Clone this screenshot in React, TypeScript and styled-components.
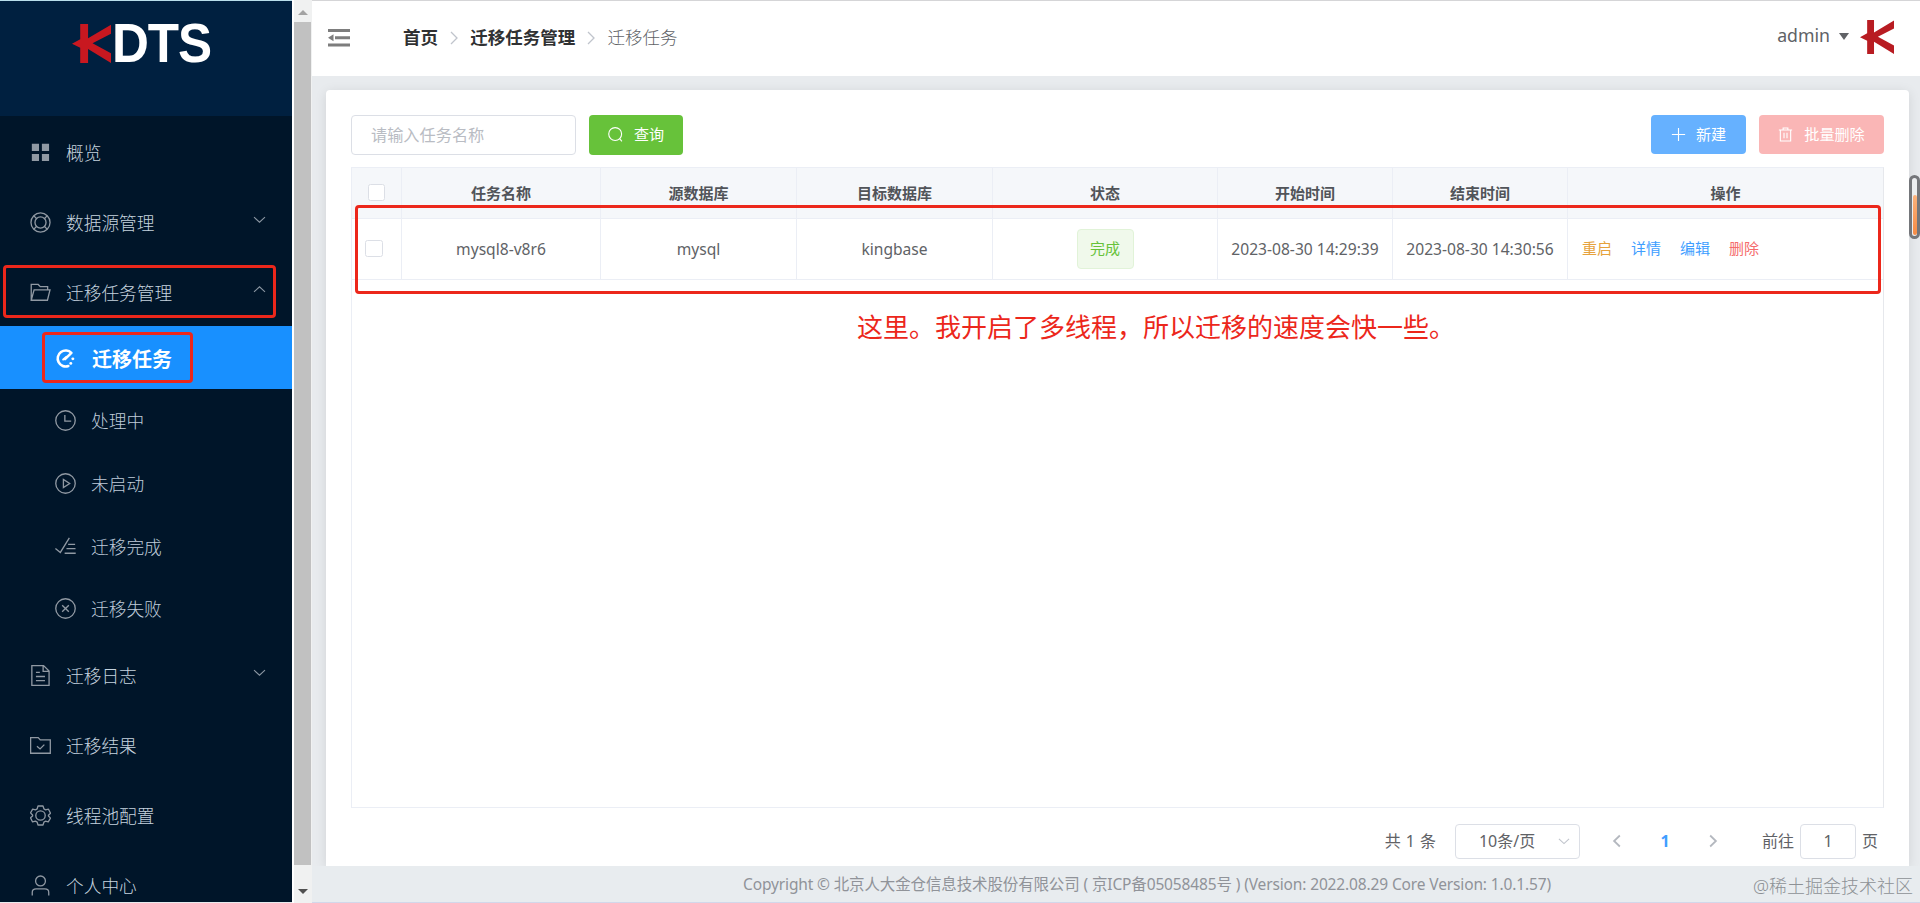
import React from "react";
import styled, { createGlobalStyle, css } from "styled-components";

const GlobalStyle = createGlobalStyle`
  * { box-sizing: border-box; }
  body {
    margin: 0;
    overflow: hidden;
    font-family: "Noto Sans", "Noto Sans CJK SC", sans-serif;
    color: #606266;
  }
`;

const Page = styled.div`
  position: relative;
  display: flex;
  width: 1920px;
  height: 903px;
  overflow: hidden;
  background: #e8ebee;
`;

/* ---------- sidebar ---------- */
const Sidebar = styled.aside`
  width: 292px;
  height: 902px;
  flex: none;
  overflow: hidden;
  background: #001529;
  border-top: 1px solid #b9dfec;
`;
const Brand = styled.div`
  display: flex;
  height: 115px;
  padding: 23px 0 0 72px;
  background: #002040;
`;
const BrandText = styled.span`
  margin: -9px 0 0 1px;
  height: 56px;
  line-height: 56px;
  color: #fff;
  font-family: "Liberation Sans", Arial, sans-serif;
  font-size: 55px;
  font-weight: 700;
  letter-spacing: -1.2px;
  transform: scaleX(0.93);
  transform-origin: left center;
`;
const MenuItem = styled.div`
  display: flex;
  align-items: center;
  height: 69.8px;
  padding: 4px 24px 0 30px;
  color: #c5d3df;
  font-size: 17.7px;
  font-weight: 300;
`;
const SubMenu = styled.div`
  padding-top: 0.9px;
  height: 313.5px;
`;
const SubItem = styled.div<{ $active?: boolean }>`
  display: flex;
  align-items: center;
  height: 62.6px;
  padding: 1.5px 0 0 55px;
  color: #bfcbd9;
  font-size: 17.7px;
  font-weight: 300;
  ${(p) =>
    p.$active &&
    css`
      background: #1890ff;
      color: #fff;
      font-size: 20px;
      font-weight: 700;
    `}
`;
const MenuIcon = styled.span`
  display: flex;
  width: 21px;
  margin-right: 15px;
  color: #9099a3;
`;
const ActiveIcon = styled(MenuIcon)`
  margin-right: 16px;
  color: #fff;
`;
const Label = styled.span<{ $drop?: number }>`
  flex: 1;
  line-height: 24px;
  padding-top: ${(p) => p.$drop ?? 1}px;
  white-space: nowrap;
`;
const Arrow = styled.span`
  display: flex;
  margin: -6px 2px 0 0;
  color: #8b97a3;
`;

/* ---------- left scroll bar ---------- */
const ScrollTrack = styled.div`
  display: flex;
  flex-direction: column;
  align-items: center;
  flex: none;
  width: 20px;
  padding: 10px 1px 0 2px;
  background: linear-gradient(to right, #fff 2px, #f0f1f1 2px);
`;
const ScrollThumb = styled.div`
  width: 17px;
  height: 843px;
  margin: 7px 0 24px;
  background: #c1c1c1;
`;
const Triangle = styled.div<{ $down?: boolean }>`
  width: 0;
  height: 0;
  border: 5px solid transparent;
  ${(p) =>
    p.$down
      ? "border-top-color:#505050;border-bottom:0;"
      : "border-bottom-color:#a3a3a3;border-top:0;"}
`;

/* ---------- main ---------- */
const Main = styled.main`
  display: flex;
  flex-direction: column;
  flex: 1;
  min-width: 0;
`;
const Header = styled.header`
  display: flex;
  align-items: center;
  height: 76px;
  padding: 0 26px 2px 16px;
  background: #fff;
  border-top: 1px solid #d5d5d7;
`;
const Crumbs = styled.nav`
  display: flex;
  align-items: center;
  margin: -1px 0 0 53px;
  font-size: 17.5px;
  line-height: 24px;
`;
const Crumb = styled.span<{ $strong?: boolean }>`
  color: ${(p) => (p.$strong ? "#303133" : "#606266")};
  font-weight: ${(p) => (p.$strong ? 700 : 300)};
`;
const CrumbSep = styled.span`
  display: flex;
  margin: 1px 12.3px 0 12px;
`;
const User = styled.div`
  display: flex;
  align-items: center;
  margin: -1px 0 0 auto;
  font-size: 17.7px;
  line-height: 24px;
`;
const UserName = styled.span`
  margin: -4px 9px 0 0;
`;
const Caret = styled.div`
  width: 0;
  height: 0;
  margin: -2px 11px 0 0;
  border: 5.5px solid transparent;
  border-top: 7px solid #606266;
  border-bottom: 0;
`;
const Card = styled.section`
  display: flex;
  flex-direction: column;
  width: 1583px;
  height: 776px;
  margin: 14px 0 0 14px;
  padding: 25px 25px 0;
  background: #fff;
  border-radius: 4px 4px 0 0;
  box-shadow: 0 2px 12px rgba(0, 0, 0, 0.1);
`;
const Toolbar = styled.div`
  display: flex;
  height: 40px;
  margin-bottom: 12px;
`;
const SearchBox = styled.div`
  width: 225px;
  height: 40px;
  margin-right: 13px;
  padding-left: 19px;
  border: 1px solid #dcdfe6;
  border-radius: 4px;
  color: #b9bcc3;
  font-size: 16.2px;
  line-height: 39px;
`;
const Button = styled.button<{ $bg: string; $w: number; $gap: number }>`
  display: flex;
  align-items: center;
  justify-content: center;
  gap: ${(p) => p.$gap}px;
  width: ${(p) => p.$w}px;
  height: 40px;
  padding: 0 0 2px;
  border: 0;
  border-radius: 4px;
  background: ${(p) => p.$bg};
  color: #fff;
  font: 400 15.1px/20px "Noto Sans", "Noto Sans CJK SC", sans-serif;
`;
const Actions = styled.div`
  display: flex;
  gap: 13px;
  margin-left: auto;
  ${Button} { height: 39px; padding-bottom: 1px; }
`;

const TableBox = styled.div`
  width: 1533px;
  height: 641px;
  border: 1px solid #ebeef5;
  border-right: 1.5px solid #e6e8ec;
`;
const Row = styled.div<{ $head?: boolean }>`
  display: grid;
  grid-template-columns: 50px 199px 196px 196px 225px 175px 175px 1fr;
  height: ${(p) => (p.$head ? 51 : 61)}px;
  background: ${(p) => (p.$head ? "#f5f7fa" : "#fff")};
  color: ${(p) => (p.$head ? "#515459" : "#606266")};
  font-size: ${(p) => (p.$head ? 15 : 15.6)}px;
  font-weight: ${(p) => (p.$head ? 700 : 400)};
`;
const Cell = styled.div<{ $align?: string }>`
  display: flex;
  align-items: center;
  justify-content: ${(p) => p.$align || "center"};
  padding-bottom: 1px;
  border-right: 1px solid #ebeef5;
  border-bottom: 1px solid #ebeef5;
  line-height: 22px;
  white-space: nowrap;
  &:last-child { border-right: 0; }
`;
const Check = styled.span<{ $shift: number }>`
  width: 17.5px;
  height: 17.5px;
  margin-left: ${(p) => p.$shift}px;
  background: #fff;
  border: 1px solid #dcdfe6;
  border-radius: 2.5px;
`;
const Tag = styled.span`
  width: 57px;
  height: 40px;
  border: 1px solid #e1f3d8;
  border-radius: 4px;
  background: #f0f9eb;
  color: #67c23a;
  font-size: 15px;
  line-height: 37px;
  text-align: center;
`;
const Link = styled.a<{ $color: string }>`
  margin: -1px 5px 0 14px;
  color: ${(p) => p.$color};
  font-size: 15px;
`;

const Pagination = styled.div`
  display: flex;
  align-items: center;
  height: 35px;
  margin-top: 16px;
  padding-right: 6px;
  justify-content: flex-end;
  font-size: 16px;
  line-height: 24px;
`;
const Total = styled.span`
  margin: -2px 19px 0 0;
  word-spacing: 0.9px;
`;
const Select = styled.div`
  display: flex;
  align-items: center;
  justify-content: space-between;
  width: 125px;
  height: 35px;
  margin-right: 30px;
  padding: 0 9px 2px 23px;
  border: 1px solid #dcdfe6;
  border-radius: 4px;
  svg { color: #c0c4cc; }
`;
const PageArrow = styled.span`
  display: flex;
  margin-top: -2px;
  color: #b4b8bf;
`;
const PageNo = styled.span`
  width: 82px;
  margin-top: -1px;
  color: #409eff;
  font-weight: 700;
  text-align: center;
`;
const Jump = styled.div`
  width: 56px;
  height: 35px;
  margin: 0 6px 0 6px;
  border: 1px solid #dcdfe6;
  border-radius: 4px;
  line-height: 32px;
  text-align: center;
`;
const JumpLabel = styled.span<{ $gap?: number }>`
  margin: -2px 0 0 ${(p) => p.$gap || 0}px;
`;

const Footer = styled.footer`
  position: relative;
  height: 36px;
  z-index: 1;
  background: #e8ecef;
  color: #909399;
  font-size: 15.5px;
  letter-spacing: -0.135px;
  line-height: 37px;
  white-space: nowrap;
  padding-left: 431px;
`;
const BottomEdge = styled.div`
  position: relative;
  z-index: 1;
  height: 1px;
  background: #d2d7ea;
`;

/* ---------- overlays ---------- */
const Mark = styled.div<{ $x: number; $y: number; $w: number; $h: number }>`
  position: absolute;
  left: ${(p) => p.$x}px;
  top: ${(p) => p.$y}px;
  width: ${(p) => p.$w}px;
  height: ${(p) => p.$h}px;
  border: 3px solid #ec271b;
  border-radius: 4px;
  z-index: 2;
`;
const Note = styled.div`
  position: absolute;
  left: 857px;
  top: 309px;
  color: #ec271b;
  font-size: 26px;
  line-height: 36px;
  white-space: nowrap;
  z-index: 2;
`;
const Watermark = styled.div`
  position: absolute;
  left: 1753px;
  top: 874px;
  color: #8d9195;
  font-size: 18px;
  font-weight: 300;
  line-height: 24px;
  white-space: nowrap;
  z-index: 2;
`;
const FloatHandle = styled.div`
  position: absolute;
  left: 1909px;
  top: 175px;
  width: 11px;
  height: 64px;
  padding: 17px 0 0 1px;
  border: 3px solid #74767a;
  border-radius: 6px;
  background: #eceef0;
  z-index: 2;
`;
const FloatFill = styled.div`
  width: 4px;
  height: 40px;
  border-radius: 2px;
  background: linear-gradient(to bottom, #fbb27c, #f58b45);
`;

/* ---------- icons ---------- */
const Ico = ({ size = 21, sw = 64, children }: { size?: number; sw?: number; children: React.ReactNode }) => (
  <svg width={size} height={size} viewBox="0 0 1024 1024" fill="none" stroke="currentColor" strokeWidth={sw}>
    {children}
  </svg>
);
const KMark = ({ w, h, color }: { w: number; h: number; color: string }) => (
  <svg width={w} height={h} viewBox="0 0 114 117" preserveAspectRatio="none" fill={color}>
    <path d="M24 0H47V43L114 2V29L60 58L114 88V117L47 75V117H24V71L0 59L24 46Z" />
  </svg>
);
const Chevron = ({ d, size, sw }: { d: "up" | "down" | "left" | "right"; size: number; sw: number }) => {
  const paths = {
    up: "M80 700L512 300L944 700",
    down: "M80 330L512 730L944 330",
    left: "M720 110L300 512L720 914",
    right: "M304 110L724 512L304 914",
  };
  return (
    <Ico size={size} sw={sw}>
      <path d={paths[d]} />
    </Ico>
  );
};

const icons: Record<string, React.ReactNode> = {
  grid: (
    <g fill="currentColor" stroke="none">
      <path d="M90 90H440V440H90ZM580 90H930V440H580ZM90 580H440V930H90ZM580 580H930V930H580Z" />
    </g>
  ),
  help: (
    <>
      <circle cx="512" cy="512" r="465" />
      <circle cx="512" cy="512" r="270" />
      <path d="M190 190L325 325M834 190L699 325M190 834L325 699M834 834L699 699" />
    </>
  ),
  folder: <path d="M60 890V120H400L500 230H860V385M60 890L200 385H975L850 890H60Z" />,
  process: (
    <>
      <path
        strokeWidth="125"
        strokeLinecap="round"
        strokeLinejoin="round"
        d="M650 880A390 390 0 1 1 800 240L490 540"
      />
      <path strokeWidth="100" strokeLinecap="round" d="M400 560L560 430" />
      <circle cx="870" cy="530" r="72" fill="currentColor" stroke="none" />
      <circle cx="770" cy="750" r="72" fill="currentColor" stroke="none" />
    </>
  ),
  clock: (
    <>
      <circle cx="512" cy="512" r="475" />
      <path d="M480 240V545H790" />
    </>
  ),
  play: (
    <>
      <circle cx="512" cy="512" r="475" />
      <path d="M410 320V704L715 512Z" />
    </>
  ),
  finished: <path d="M20 610L260 800L700 90M640 410H980M560 620H1000M470 840H1010" />,
  close: (
    <>
      <circle cx="512" cy="512" r="475" />
      <path d="M350 350L674 674M674 350L350 674" />
    </>
  ),
  doc: (
    <>
      <path d="M90 30H660L930 290V990H90ZM640 40V310H920" />
      <path d="M290 360H480M290 560H730M290 760H730" />
    </>
  ),
  folderOk: <path d="M30 130H400L500 240H990V890H30ZM340 550L490 680L700 470" />,
  gear: (
    <>
      <circle cx="512" cy="512" r="230" />
      <path
        strokeLinejoin="round"
        d="M390 50H634L680 190L760 235L900 205L1000 400L900 500V540L1000 640L890 825L750 790L680 835L634 975H390L350 835L265 790L125 825L25 625L125 540V490L25 385L130 200L270 235L350 190Z"
      />
    </>
  ),
  user: (
    <>
      <circle cx="512" cy="290" r="240" />
      <path d="M110 1000V850Q110 680 300 680H724Q914 680 914 850V1000" />
    </>
  ),
};

type Item = { icon: string; text: string; arrow?: "up" | "down" };
const topItems: Item[] = [
  { icon: "grid", text: "概览" },
  { icon: "help", text: "数据源管理", arrow: "down" },
  { icon: "folder", text: "迁移任务管理", arrow: "up" },
];
const subItems: Item[] = [
  { icon: "process", text: "迁移任务" },
  { icon: "clock", text: "处理中" },
  { icon: "play", text: "未启动" },
  { icon: "finished", text: "迁移完成" },
  { icon: "close", text: "迁移失败" },
];
const bottomItems: Item[] = [
  { icon: "doc", text: "迁移日志", arrow: "down" },
  { icon: "folderOk", text: "迁移结果" },
  { icon: "gear", text: "线程池配置" },
  { icon: "user", text: "个人中心" },
];

const Entry = ({ icon, text, arrow }: Item) => (
  <MenuItem>
    <MenuIcon>
      <Ico>{icons[icon]}</Ico>
    </MenuIcon>
    <Label>{text}</Label>
    {arrow && (
      <Arrow>
        <Chevron d={arrow} size={13} sw={85} />
      </Arrow>
    )}
  </MenuItem>
);

const Separator = () => (
  <CrumbSep>
    <svg width="8" height="14" viewBox="0 0 8 14" fill="none" stroke="#c0c4cc" strokeWidth="1.3">
      <path d="M1 1L7 7L1 13" />
    </svg>
  </CrumbSep>
);

const columns = ["任务名称", "源数据库", "目标数据库", "状态", "开始时间", "结束时间", "操作"];

export default function App() {
  return (
    <>
      <GlobalStyle />
      <Page>
        <Sidebar>
          <Brand>
            <KMark w={39} h={39} color="#c81820" />
            <BrandText>DTS</BrandText>
          </Brand>
          {topItems.map((i) => (
            <Entry key={i.text} {...i} />
          ))}
          <SubMenu>
            {subItems.map((i, n) => {
              const Wrap = n === 0 ? ActiveIcon : MenuIcon;
              return (
                <SubItem key={i.text} $active={n === 0}>
                  <Wrap>
                    <Ico>{icons[i.icon]}</Ico>
                  </Wrap>
                  <Label $drop={n === 0 ? 3 : 1}>{i.text}</Label>
                </SubItem>
              );
            })}
          </SubMenu>
          {bottomItems.map((i) => (
            <Entry key={i.text} {...i} />
          ))}
        </Sidebar>
        <ScrollTrack>
          <Triangle />
          <ScrollThumb />
          <Triangle $down />
        </ScrollTrack>
        <Main>
          <Header>
            <svg width="22" height="18" viewBox="0 0 22 18" fill="#7d7d7d">
              <path d="M0 0H22V3H0ZM7 7.3H22V10.3H7ZM0 14.5H22V17.5H0ZM0 8.8L5.5 5.3V12.3Z" />
            </svg>
            <Crumbs>
              <Crumb $strong>首页</Crumb>
              <Separator />
              <Crumb $strong>迁移任务管理</Crumb>
              <Separator />
              <Crumb>迁移任务</Crumb>
            </Crumbs>
            <User>
              <UserName>admin</UserName>
              <Caret />
              <KMark w={34} h={34} color="#b81c22" />
            </User>
          </Header>
          <Card>
            <Toolbar>
              <SearchBox>请输入任务名称</SearchBox>
              <Button $bg="#67c23a" $w={94} $gap={11}>
                <Ico size={15} sw={75}>
                  <circle cx="490" cy="480" r="440" />
                  <path d="M790 790L950 980" />
                </Ico>
                查询
              </Button>
              <Actions>
                <Button $bg="#66b1ff" $w={95} $gap={10}>
                  <Ico size={15} sw={75}>
                    <path d="M512 60V964M60 512H964" />
                  </Ico>
                  新建
                </Button>
                <Button $bg="#fab6b6" $w={125} $gap={11}>
                  <Ico size={15} sw={75}>
                    <path d="M60 200H964M350 190V70H674V190M160 200V960H864V200M410 400V760M614 400V760" />
                  </Ico>
                  批量删除
                </Button>
              </Actions>
            </Toolbar>
            <TableBox>
              <Row $head>
                <Cell>
                  <Check $shift={0} />
                </Cell>
                {columns.map((c) => (
                  <Cell key={c}>{c}</Cell>
                ))}
              </Row>
              <Row>
                <Cell>
                  <Check $shift={-5} />
                </Cell>
                <Cell>mysql8-v8r6</Cell>
                <Cell>mysql</Cell>
                <Cell>kingbase</Cell>
                <Cell>
                  <Tag>完成</Tag>
                </Cell>
                <Cell>2023-08-30 14:29:39</Cell>
                <Cell>2023-08-30 14:30:56</Cell>
                <Cell $align="flex-start">
                  <Link $color="#e6a23c">重启</Link>
                  <Link $color="#409eff">详情</Link>
                  <Link $color="#409eff">编辑</Link>
                  <Link $color="#f56c6c">删除</Link>
                </Cell>
              </Row>
            </TableBox>
            <Pagination>
              <Total>共 1 条</Total>
              <Select>
                10条/页
                <Chevron d="down" size={12} sw={95} />
              </Select>
              <PageArrow>
                <Chevron d="left" size={14} sw={130} />
              </PageArrow>
              <PageNo>1</PageNo>
              <PageArrow>
                <Chevron d="right" size={14} sw={130} />
              </PageArrow>
              <JumpLabel $gap={42}>前往</JumpLabel>
              <Jump>1</Jump>
              <JumpLabel>页</JumpLabel>
            </Pagination>
          </Card>
          <Footer>
            Copyright © 北京人大金仓信息技术股份有限公司 ( 京ICP备05058485号 ) (Version: 2022.08.29 Core Version: 1.0.1.57)
          </Footer>
          <BottomEdge />
        </Main>
        <Mark $x={3} $y={265} $w={273} $h={53} />
        <Mark $x={42} $y={332} $w={151} $h={51} />
        <Mark $x={355} $y={205} $w={1526} $h={89} />
        <Note>这里。我开启了多线程，所以迁移的速度会快一些。</Note>
        <FloatHandle>
          <FloatFill />
        </FloatHandle>
        <Watermark>@稀土掘金技术社区</Watermark>
      </Page>
    </>
  );
}
